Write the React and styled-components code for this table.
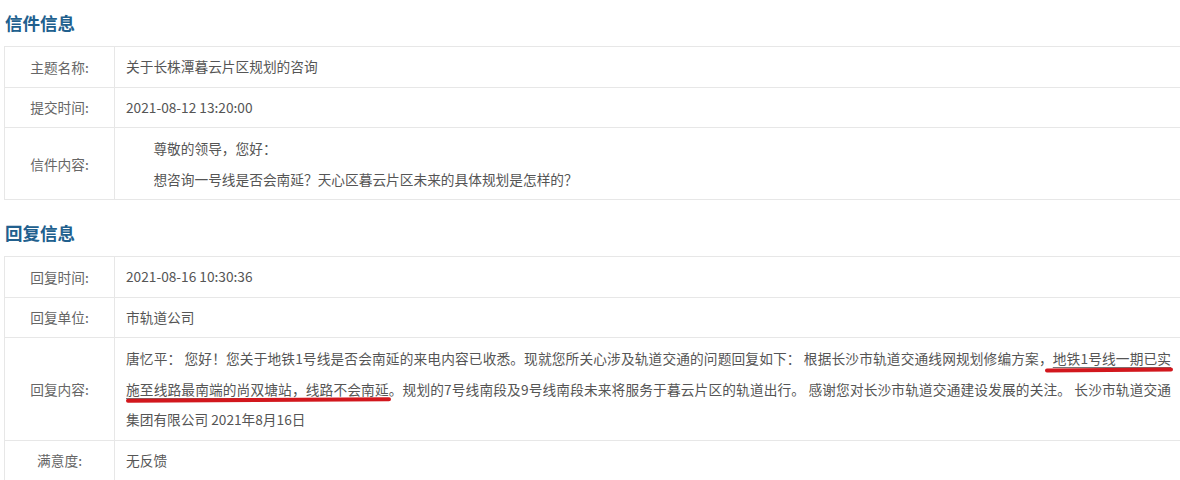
import styled, { createGlobalStyle } from "styled-components";

const GlobalStyle = createGlobalStyle`
  html, body {
    margin: 0;
    padding: 0;
    background: #fff;
    overflow: hidden;
  }
  body {
    font-family: "Noto Sans CJK SC", "Microsoft YaHei", sans-serif;
    font-size: 13.7px;
    color: #555;
  }
`;

const Page = styled.div`
  padding: 11px 0 0 4px;
`;

const SectionTitle = styled.h2`
  margin: ${(p) => (p.$first ? "0" : "21px")} 0 11px 1px;
  height: 24px;
  line-height: 24px;
  font-size: 17.5px;
  font-weight: bold;
  color: #21608e;
`;

const InfoTable = styled.table`
  width: 1180px;
  table-layout: fixed;
  border-collapse: collapse;
  border: 1px solid #e7e7e7;
`;

const Label = styled.td`
  width: 109px;
  padding: 0;
  line-height: 30px;
  text-align: center;
  color: #666;
  border: 1px solid #e7e7e7;
  vertical-align: middle;
`;

const Value = styled.td`
  padding: 5px 12px 5px 11px;
  line-height: ${(p) => (p.$tall ? "30.5px" : "29.5px")};
  color: #555;
  border: 1px solid #e7e7e7;
  vertical-align: middle;
`;

const Para = styled.p`
  margin: 0;
  text-indent: 2em;
`;

const Line = styled.div`
  white-space: nowrap;
  text-align: ${(p) => (p.$fill ? "justify" : "left")};
  text-align-last: ${(p) => (p.$fill ? "justify" : "auto")};
`;

const Marked = styled.span`
  position: relative;
  text-decoration: underline;
  text-decoration-color: #777;
  text-decoration-thickness: 1px;
  text-underline-offset: 3px;

  &::after {
    content: "";
    position: absolute;
    left: ${(p) => p.$from || 0}px;
    right: -2px;
    bottom: -3px;
    height: 3.5px;
    border-radius: 2px;
    background: #d2171d;
    transform: rotate(${(p) => p.$tilt || 0}deg);
  }
`;

export default function App() {
  return (
    <Page>
      <GlobalStyle />
      <SectionTitle $first>信件信息</SectionTitle>
      <InfoTable>
        <tbody>
          <tr>
            <Label>主题名称:</Label>
            <Value>关于长株潭暮云片区规划的咨询</Value>
          </tr>
          <tr>
            <Label>提交时间:</Label>
            <Value>2021-08-12 13:20:00</Value>
          </tr>
          <tr>
            <Label>信件内容:</Label>
            <Value $tall>
              <Para>尊敬的领导，您好：</Para>
              <Para>想咨询一号线是否会南延？天心区暮云片区未来的具体规划是怎样的？</Para>
            </Value>
          </tr>
        </tbody>
      </InfoTable>

      <SectionTitle>回复信息</SectionTitle>
      <InfoTable>
        <tbody>
          <tr>
            <Label>回复时间:</Label>
            <Value>2021-08-16 10:30:36</Value>
          </tr>
          <tr>
            <Label>回复单位:</Label>
            <Value>市轨道公司</Value>
          </tr>
          <tr>
            <Label>回复内容:</Label>
            <Value $tall>
              <Line $fill>
                唐忆平： 您好！您关于地铁1号线是否会南延的来电内容已收悉。现就您所关心涉及轨道交通的问题回复如下： 根据长沙市轨道交通线网规划修编方案，
                <Marked $from={-8} $tilt={-0.4}>地铁1号线一期已实</Marked>
              </Line>
              <Line $fill>
                <Marked $tilt={-0.3}>施至线路最南端的尚双塘站，线路不会南延</Marked>。规划的7号线南段及9号线南段未来将服务于暮云片区的轨道出行。 感谢您对长沙市轨道交通建设发展的关注。 长沙市轨道交通
              </Line>
              <Line>集团有限公司 2021年8月16日</Line>
            </Value>
          </tr>
          <tr>
            <Label>满意度:</Label>
            <Value>无反馈</Value>
          </tr>
        </tbody>
      </InfoTable>
    </Page>
  );
}
